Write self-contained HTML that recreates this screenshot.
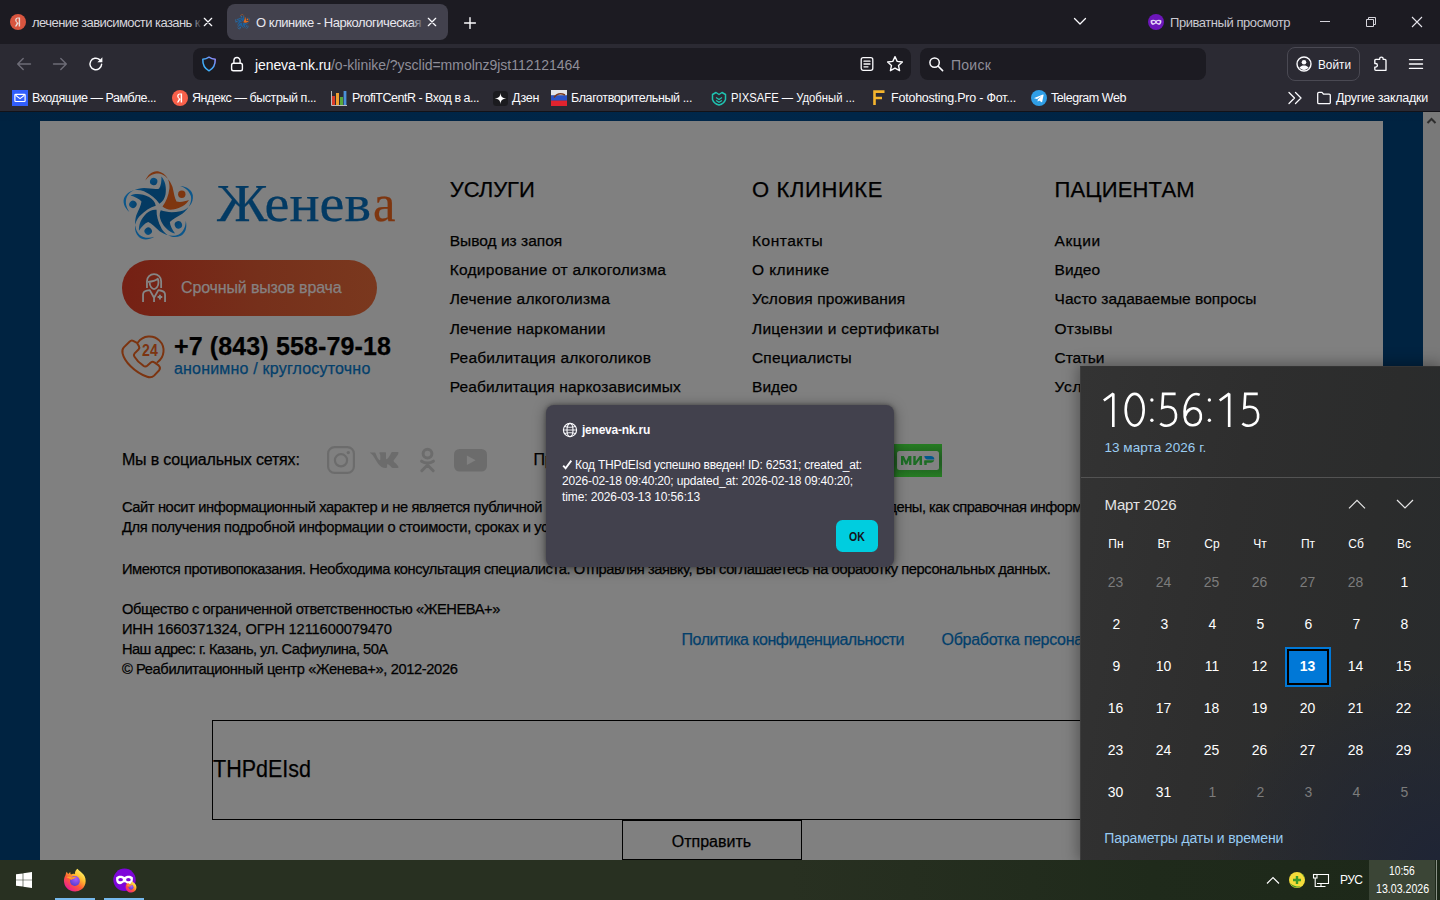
<!DOCTYPE html>
<html lang="ru"><head><meta charset="utf-8"><title>O klinike</title>
<style>
*{box-sizing:border-box;margin:0;padding:0}
html,body{width:1440px;height:900px;overflow:hidden;background:#002340;font-family:"Liberation Sans",sans-serif;}
.t{position:absolute;white-space:pre;line-height:1;}
.abs{position:absolute}
#chrome{position:absolute;left:0;top:0;width:1440px;height:112px;background:#2b2a33;overflow:hidden}
#tabbar{position:absolute;left:0;top:0;width:1440px;height:44px;background:#1c1b22}
#page{position:absolute;left:0;top:112px;width:1440px;height:748px;background:#002341;overflow:hidden}
#panel{position:absolute;left:40px;top:9px;width:1343px;height:760px;background:#808080}
#sb{position:absolute;left:1423px;top:0;width:17px;height:748px;background:#797979}
#dlg{position:absolute;left:546px;top:405px;width:348px;height:162px;background:#42414d;border-radius:8px;box-shadow:0 2px 14px rgba(0,0,0,.42),0 0 4px rgba(0,0,0,.35)}
#cal{position:absolute;left:1080px;top:366px;width:360px;height:494px;background:#2b2b2b;border-left:1px solid #3d3d3d;border-top:1px solid #343434;overflow:hidden}
#calsh{position:absolute;left:1080px;top:366px;width:360px;height:494px;box-shadow:0 0 14px 2px rgba(0,0,0,.36)}
#task{position:absolute;left:0;top:860px;width:1440px;height:40px;background:#273021;overflow:hidden}
</style></head><body>
<div id="page">
<div id="panel"></div>
<div id="sb"></div>

<div class="abs" style="left:0;top:0;width:1423px;height:9px;background:linear-gradient(90deg,#002240,#00274a 50%,#002240)"></div>
<div class="abs" style="left:122px;top:148px;width:255px;height:56px;border-radius:28px;background:linear-gradient(90deg,#752014 0%,#76301b 54%,#7a381e 100%)"></div>
<div class="abs" style="left:212px;top:608px;width:999px;height:100px;border:1px solid #000"></div>
<div class="abs" style="left:622px;top:707px;width:180px;height:41px;border:1px solid #000;border-top-width:2px"></div>
<svg class="abs" style="left:1423px;top:0" width="17" height="17" viewBox="0 0 17 17"><path d="M4.5 11L8.5 7L12.5 11" stroke="#2e2e2e" stroke-width="2" fill="none"/></svg>
<svg class="abs" style="left:110px;top:48px" width="100.0" height="95.0" viewBox="-49 -47.2 100 95"><defs><radialGradient id="sg2" gradientUnits="userSpaceOnUse" cx="0" cy="0" r="38"><stop offset=".5" stop-color="#043a62"/><stop offset="1" stop-color="#0e5d94"/></radialGradient></defs><g transform="rotate(0)" fill="#7e3610"><path d="M3.5 -0.7C7 -5.2 9.5 -11.2 10.5 -19.2C11 -27.2 7 -34.2 -1 -35.9C-6 -36.7 -11 -33.2 -13.7 -26.7C-10 -31.7 -5 -34.2 0 -33.7C6 -32.7 11 -27.2 13.5 -20.2C15 -14.2 15.5 -9.2 17.5 -5.7C21 -4.7 26 -5.7 30 -7.2C27 -2.2 21 1.3 14 2.3C10 2.8 6 1.8 3.5 -0.7Z"/><circle cx="22.8" cy="-13" r="3.7"/></g><g transform="rotate(72)" fill="url(#sg2)"><path d="M3.5 -0.7C7 -5.2 9.5 -11.2 10.5 -19.2C11 -27.2 7 -34.2 -1 -35.9C-6 -36.7 -11 -33.2 -13.7 -26.7C-10 -31.7 -5 -34.2 0 -33.7C6 -32.7 11 -27.2 13.5 -20.2C15 -14.2 15.5 -9.2 17.5 -5.7C21 -4.7 26 -5.7 30 -7.2C27 -2.2 21 1.3 14 2.3C10 2.8 6 1.8 3.5 -0.7Z"/><circle cx="22.8" cy="-13" r="3.7"/></g><g transform="rotate(144)" fill="url(#sg2)"><path d="M3.5 -0.7C7 -5.2 9.5 -11.2 10.5 -19.2C11 -27.2 7 -34.2 -1 -35.9C-6 -36.7 -11 -33.2 -13.7 -26.7C-10 -31.7 -5 -34.2 0 -33.7C6 -32.7 11 -27.2 13.5 -20.2C15 -14.2 15.5 -9.2 17.5 -5.7C21 -4.7 26 -5.7 30 -7.2C27 -2.2 21 1.3 14 2.3C10 2.8 6 1.8 3.5 -0.7Z"/><circle cx="22.8" cy="-13" r="3.7"/></g><g transform="rotate(216)" fill="url(#sg2)"><path d="M3.5 -0.7C7 -5.2 9.5 -11.2 10.5 -19.2C11 -27.2 7 -34.2 -1 -35.9C-6 -36.7 -11 -33.2 -13.7 -26.7C-10 -31.7 -5 -34.2 0 -33.7C6 -32.7 11 -27.2 13.5 -20.2C15 -14.2 15.5 -9.2 17.5 -5.7C21 -4.7 26 -5.7 30 -7.2C27 -2.2 21 1.3 14 2.3C10 2.8 6 1.8 3.5 -0.7Z"/><circle cx="22.8" cy="-13" r="3.7"/></g><g transform="rotate(288)" fill="url(#sg2)"><path d="M3.5 -0.7C7 -5.2 9.5 -11.2 10.5 -19.2C11 -27.2 7 -34.2 -1 -35.9C-6 -36.7 -11 -33.2 -13.7 -26.7C-10 -31.7 -5 -34.2 0 -33.7C6 -32.7 11 -27.2 13.5 -20.2C15 -14.2 15.5 -9.2 17.5 -5.7C21 -4.7 26 -5.7 30 -7.2C27 -2.2 21 1.3 14 2.3C10 2.8 6 1.8 3.5 -0.7Z"/><circle cx="22.8" cy="-13" r="3.7"/></g></svg><svg class="abs" style="left:134px;top:154px" width="40" height="44" viewBox="0 0 818 900"><g stroke="#868686" stroke-width="37" fill="none" stroke-linejoin="round"><path d="M265 452V310A145 145 0 0 1 555 310V452"/><path d="M285 326C360 322 440 302 487 262C500 290 502 310 500 335C500 420 450 472 410 472C370 472 320 420 320 335"/><path d="M185 738V590Q185 522 260 506L322 494L410 650L498 494L560 506Q635 522 635 590V738M410 650V738"/><path d="M530 588V684M482 636H578" stroke-width="40"/></g></svg>
<svg class="abs" style="left:116px;top:218px" width="60" height="54" viewBox="0 0 1000 900"><g stroke="#7c3410" stroke-width="33" fill="none" stroke-linejoin="round" stroke-linecap="round"><path d="M350 215L285 180Q255 165 225 195L130 290Q95 330 110 390C140 520 300 700 520 780Q590 805 635 760L720 670Q750 630 710 590L640 540Q610 515 580 540L520 595Q490 620 455 595C400 560 330 480 305 440Q290 415 310 390L375 325Q400 295 380 265Z"/><path d="M365 208A235 235 0 1 1 690 537"/></g><text x="566" y="438" text-anchor="middle" font-family="Liberation Sans, sans-serif" font-size="262" font-weight="700" fill="#7c3410" textLength="262" lengthAdjust="spacingAndGlyphs">24</text></svg>
<svg class="abs" style="left:327px;top:334px" width="28" height="28" viewBox="0 0 28 28"><rect x="1.1" y="1.1" width="25.8" height="25.8" rx="6.5" stroke="#6c6c6c" stroke-width="2.2" fill="none"/><circle cx="14" cy="14.3" r="6.1" stroke="#6c6c6c" stroke-width="2.2" fill="none"/><circle cx="21.3" cy="6.6" r="1.7" fill="#6c6c6c"/></svg>
<svg class="abs" style="left:370px;top:340px" width="29" height="16" viewBox="0 0 29 16"><path d="M0 .6H4.6C5.2 .6 5.5 .9 5.7 1.5C6.8 5 8.9 8.2 9.8 8.2C10.1 8.2 10.3 8 10.3 7.200V3.400C10.2 1.600 9.300 1.500 9.300 .9C9.300 .6 9.600 .300 10 .300H15.200C15.800 .300 16 .6 16 1.300V6.400C16 7 16.300 7.200 16.500 7.200C16.800 7.200 17.200 7 17.800 6.300C19.800 4.100 21.200 .800 21.200 .800C21.400 .400 21.700 .000 22.400 .000H27.400C28.400 .000 28.600 .500 28.400 1.200C27.900 3.200 23.800 8.200 23.800 8.200C23.500 8.700 23.400 8.900 23.800 9.500C24.100 9.900 25.200 10.800 25.900 11.600C27.200 13 28.200 14.200 28.500 15C28.700 15.700 28.300 16 27.500 16H22.800C21.900 16 21.600 15.500 20 13.800C18.600 12.400 18 12.200 17.700 12.200C17.200 12.200 17.100 12.300 17.100 13V15.100C17.100 15.700 16.900 16 15.400 16C12.900 16 10.100 14.500 8.100 11.700C5.100 7.600 3.400 2.900 .100 1.100C-.1 .8 0 .6 0 .6Z" fill="#6c6c6c"/></svg>
<svg class="abs" style="left:419px;top:335px" width="17" height="26" viewBox="0 0 17 26"><circle cx="8.500" cy="6.600" r="4.400" stroke="#6c6c6c" stroke-width="3" fill="none"/><path d="M2.600 14.200C6 16.600 11 16.600 14.400 14.200M8.500 16.300V18.500M8.500 18L2.800 23.700M8.500 18L14.200 23.700" stroke="#6c6c6c" stroke-width="3" fill="none" stroke-linecap="round"/></svg>
<svg class="abs" style="left:454px;top:337px" width="33" height="23" viewBox="0 0 33 23"><rect x="0" y="0" width="33" height="22.600" rx="5.500" fill="#6c6c6c"/><path d="M12.900 6.600L21.600 11.300L12.900 16Z" fill="#808080"/></svg>
<div class="abs" style="left:894px;top:332px;width:48px;height:33px;background:linear-gradient(180deg,#267c22 0%,#205f21 40%,#205f21 62%,#267c22 100%)"></div>
<div class="abs" style="left:896.700px;top:339.2px;width:42.200px;height:18.600px;background:#828282;border-radius:2.500px"></div>
<svg class="abs" style="left:901px;top:344px" width="34" height="9" viewBox="0 0 34 9"><path d="M0 0H2.900L5.200 5.200L7.500 0H10.400V9H8.100V3.800L6.100 8.400H4.300L2.300 3.800V9H0ZM12.300 0H14.700V5.400L18.600 0H21V9H18.600V3.600L14.700 9H12.300ZM23.300 5.300H25.700V9H23.300Z" fill="#1c6c24"/><path d="M23.300 0H29.500C32 0 33.500 1.200 33.300 3.500H26.500C24.800 3.500 23.600 2 23.300 0Z" fill="#00588c"/><path d="M23.300 4.200H33.200C32.800 5.800 31.500 6.700 29.600 6.700H23.300Z" fill="#1c6c24"/></svg><!--PAGE-->
<span class="t" style="left:217.00px;top:65.26px;font-size:52.5px;color:#033a63;font-family:'Liberation Serif',serif;transform:scaleX(1.0704);transform-origin:0 0;-webkit-text-stroke:0.25px;">Женев</span>
<span class="t" style="left:372.50px;top:65.26px;font-size:52.5px;color:#7e3610;font-family:'Liberation Serif',serif;transform:scaleX(0.9651);transform-origin:0 0;-webkit-text-stroke:0.25px;">а</span>
<span class="t" style="left:181.00px;top:168.46px;font-size:16px;color:#868181;letter-spacing:-0.144px;-webkit-text-stroke:0.25px;">Срочный вызов врача</span>
<span class="t" style="left:174.00px;top:222.34px;font-size:25px;color:#000;font-weight:700;letter-spacing:0.126px;-webkit-text-stroke:0.25px;">+7 (843) 558-79-18</span>
<span class="t" style="left:174.00px;top:248.66px;font-size:16px;color:#033f6b;letter-spacing:0.193px;-webkit-text-stroke:0.25px;">анонимно / круглосуточно</span>
<span class="t" style="left:449.70px;top:66.98px;font-size:22px;color:#000;letter-spacing:-0.030px;-webkit-text-stroke:0.25px;">УСЛУГИ</span>
<span class="t" style="left:752.00px;top:66.98px;font-size:22px;color:#000;letter-spacing:0.624px;-webkit-text-stroke:0.25px;">О КЛИНИКЕ</span>
<span class="t" style="left:1054.60px;top:66.98px;font-size:22px;color:#000;letter-spacing:0.140px;-webkit-text-stroke:0.25px;">ПАЦИЕНТАМ</span>
<span class="t" style="left:449.70px;top:121.28px;font-size:15.5px;color:#000;letter-spacing:0.009px;-webkit-text-stroke:0.25px;">Вывод из запоя</span>
<span class="t" style="left:449.70px;top:150.38px;font-size:15.5px;color:#000;letter-spacing:0.262px;-webkit-text-stroke:0.25px;">Кодирование от алкоголизма</span>
<span class="t" style="left:449.70px;top:179.48px;font-size:15.5px;color:#000;letter-spacing:0.224px;-webkit-text-stroke:0.25px;">Лечение алкоголизма</span>
<span class="t" style="left:449.70px;top:208.58px;font-size:15.5px;color:#000;letter-spacing:0.236px;-webkit-text-stroke:0.25px;">Лечение наркомании</span>
<span class="t" style="left:449.70px;top:237.68px;font-size:15.5px;color:#000;letter-spacing:0.214px;-webkit-text-stroke:0.25px;">Реабилитация алкоголиков</span>
<span class="t" style="left:449.70px;top:266.78px;font-size:15.5px;color:#000;letter-spacing:0.133px;-webkit-text-stroke:0.25px;">Реабилитация наркозависимых</span>
<span class="t" style="left:752.00px;top:121.28px;font-size:15.5px;color:#000;letter-spacing:0.518px;-webkit-text-stroke:0.25px;">Контакты</span>
<span class="t" style="left:752.00px;top:150.38px;font-size:15.5px;color:#000;letter-spacing:0.408px;-webkit-text-stroke:0.25px;">О клинике</span>
<span class="t" style="left:752.00px;top:179.48px;font-size:15.5px;color:#000;letter-spacing:0.145px;-webkit-text-stroke:0.25px;">Условия проживания</span>
<span class="t" style="left:752.00px;top:208.58px;font-size:15.5px;color:#000;letter-spacing:0.251px;-webkit-text-stroke:0.25px;">Лицензии и сертификаты</span>
<span class="t" style="left:752.00px;top:237.68px;font-size:15.5px;color:#000;letter-spacing:0.149px;-webkit-text-stroke:0.25px;">Специалисты</span>
<span class="t" style="left:752.00px;top:266.78px;font-size:15.5px;color:#000;letter-spacing:0.041px;-webkit-text-stroke:0.25px;">Видео</span>
<span class="t" style="left:1054.60px;top:121.28px;font-size:15.5px;color:#000;letter-spacing:0.534px;-webkit-text-stroke:0.25px;">Акции</span>
<span class="t" style="left:1054.60px;top:150.38px;font-size:15.5px;color:#000;letter-spacing:0.041px;-webkit-text-stroke:0.25px;">Видео</span>
<span class="t" style="left:1054.60px;top:179.48px;font-size:15.5px;color:#000;letter-spacing:0.030px;-webkit-text-stroke:0.25px;">Часто задаваемые вопросы</span>
<span class="t" style="left:1054.60px;top:208.58px;font-size:15.5px;color:#000;letter-spacing:0.203px;-webkit-text-stroke:0.25px;">Отзывы</span>
<span class="t" style="left:1054.60px;top:237.68px;font-size:15.5px;color:#000;letter-spacing:-0.072px;-webkit-text-stroke:0.25px;">Статьи</span>
<span class="t" style="left:1054.60px;top:266.78px;font-size:15.5px;color:#000;letter-spacing:0.621px;-webkit-text-stroke:0.25px;">Услуги</span>
<span class="t" style="left:121.90px;top:340.46px;font-size:16px;color:#000;letter-spacing:-0.171px;-webkit-text-stroke:0.25px;">Мы в социальных сетях:</span>
<span class="t" style="left:533.40px;top:340.46px;font-size:16px;color:#000;letter-spacing:-0.112px;-webkit-text-stroke:0.25px;">Принимаем к оплате:</span>
<span class="t" style="left:121.90px;top:388.06px;font-size:14.7px;color:#000;letter-spacing:-0.392px;-webkit-text-stroke:0.25px;">Сайт носит информационный характер и не является публичной</span>
<span class="t" style="left:547.00px;top:388.06px;font-size:14.7px;color:#000;-webkit-text-stroke:0.25px;">офертой.</span>
<span class="t" style="left:650.00px;top:388.06px;font-size:14.7px;color:#000;letter-spacing:0.306px;-webkit-text-stroke:0.25px;">Цены, указанные на сайте, приве</span>
<span class="t" style="left:888.50px;top:388.06px;font-size:14.7px;color:#000;letter-spacing:-0.507px;-webkit-text-stroke:0.25px;">дены, как справочная информация.</span>
<span class="t" style="left:121.90px;top:407.76px;font-size:14.7px;color:#000;letter-spacing:-0.300px;-webkit-text-stroke:0.25px;">Для получения подробной информации о стоимости, сроках и условиях</span>
<span class="t" style="left:121.90px;top:449.76px;font-size:14.7px;color:#000;letter-spacing:-0.421px;-webkit-text-stroke:0.25px;">Имеются противопоказания. Необходима консультация специалиста. Отправляя заявку, Вы соглашаетесь на обработку персональных данных.</span>
<span class="t" style="left:121.90px;top:490.16px;font-size:14.7px;color:#000;letter-spacing:-0.424px;-webkit-text-stroke:0.25px;">Общество с ограниченной ответственностью «ЖЕНЕВА+»</span>
<span class="t" style="left:121.90px;top:509.86px;font-size:14.7px;color:#000;letter-spacing:-0.137px;-webkit-text-stroke:0.25px;">ИНН 1660371324, ОГРН 1211600079470</span>
<span class="t" style="left:121.90px;top:529.66px;font-size:14.7px;color:#000;letter-spacing:-0.552px;-webkit-text-stroke:0.25px;">Наш адрес: г. Казань, ул. Сафиулина, 50А</span>
<span class="t" style="left:121.90px;top:550.06px;font-size:14.7px;color:#000;letter-spacing:-0.383px;-webkit-text-stroke:0.25px;">© Реабилитационный центр «Женева+», 2012-2026</span>
<span class="t" style="left:681.60px;top:520.16px;font-size:16px;color:#033f6b;letter-spacing:-0.505px;-webkit-text-stroke:0.25px;">Политика конфиденциальности</span>
<span class="t" style="left:941.60px;top:520.16px;font-size:16px;color:#033f6b;letter-spacing:-0.306px;-webkit-text-stroke:0.25px;">Обработка персональных данных</span>
<span class="t" style="left:213.00px;top:644.76px;font-size:24.5px;color:#000;transform:scaleX(0.8777);transform-origin:0 0;-webkit-text-stroke:0.25px;">THPdEIsd</span>
<span class="t" style="left:671.70px;top:721.66px;font-size:16px;color:#000;letter-spacing:0.017px;-webkit-text-stroke:0.25px;">Отправить</span>
</div>
<div id="chrome"><div id="tabbar"></div>

<div class="abs" style="left:0;top:111px;width:1440px;height:1px;background:#131218"></div>
<div class="abs" style="left:227px;top:4px;width:221px;height:36px;background:#42414d;border-radius:8px"></div>
<div class="abs" style="left:193px;top:48px;width:718px;height:32px;background:#1c1b22;border-radius:8px"></div>
<div class="abs" style="left:920px;top:48px;width:286px;height:32px;background:#1c1b22;border-radius:8px"></div>
<div class="abs" style="left:1287px;top:47px;width:73px;height:34px;border:1px solid #4a4953;border-radius:8px"></div>

<span class="t" style="left:32.00px;top:16.00px;font-size:13px;color:#d6d5dc;letter-spacing:-0.564px;">лечение зависимости казань к</span>
<span class="t" style="left:256.00px;top:16.00px;font-size:13px;color:#e8e7ee;letter-spacing:-0.475px;">О клинике - Наркологическая</span>
<span class="t" style="left:1170.00px;top:16.00px;font-size:13px;color:#c9c8d0;letter-spacing:-0.443px;">Приватный просмотр</span>
<span class="t" style="left:255.00px;top:58.35px;font-size:14px;color:#fbfbfe;letter-spacing:-0.087px;">jeneva-nk.ru</span>
<span class="t" style="left:331.00px;top:58.35px;font-size:14px;color:#8f8e99;letter-spacing:-0.025px;">/o-klinike/?ysclid=mmolnz9jst112121464</span>
<span class="t" style="left:951.00px;top:57.65px;font-size:14px;color:#8f8e99;letter-spacing:0.241px;">Поиск</span>
<span class="t" style="left:1318.00px;top:58.00px;font-size:13px;color:#fbfbfe;transform:scaleX(0.9068);transform-origin:0 0;">Войти</span>
<span class="t" style="left:32.00px;top:92.42px;font-size:12.5px;color:#fbfbfe;letter-spacing:-0.466px;">Входящие — Рамбле...</span>
<span class="t" style="left:192.00px;top:92.42px;font-size:12.5px;color:#fbfbfe;letter-spacing:-0.438px;">Яндекс — быстрый п...</span>
<span class="t" style="left:352.00px;top:92.42px;font-size:12.5px;color:#fbfbfe;letter-spacing:-0.485px;">ProfiTCentR - Вход в а...</span>
<span class="t" style="left:512.00px;top:92.42px;font-size:12.5px;color:#fbfbfe;letter-spacing:-0.332px;">Дзен</span>
<span class="t" style="left:571.00px;top:92.42px;font-size:12.5px;color:#fbfbfe;letter-spacing:-0.385px;">Благотворительный ...</span>
<span class="t" style="left:731.00px;top:92.42px;font-size:12.5px;color:#fbfbfe;transform:scaleX(0.9026);transform-origin:0 0;">PIXSAFE — Удобный ...</span>
<span class="t" style="left:891.00px;top:92.42px;font-size:12.5px;color:#fbfbfe;letter-spacing:-0.221px;">Fotohosting.Pro - Фот...</span>
<span class="t" style="left:1051.00px;top:92.42px;font-size:12.5px;color:#fbfbfe;letter-spacing:-0.447px;">Telegram Web</span>
<span class="t" style="left:1336.00px;top:92.42px;font-size:12.5px;color:#fbfbfe;letter-spacing:-0.252px;">Другие закладки</span>
<div class="abs" style="left:411px;top:12px;width:11px;height:20px;background:linear-gradient(90deg,rgba(66,65,77,0),rgba(66,65,77,.8))"></div>
<div class="abs" style="left:190px;top:12px;width:11px;height:20px;background:linear-gradient(90deg,rgba(28,27,34,0),rgba(28,27,34,.85))"></div>
<svg class="abs" style="left:10px;top:14px;" width="16" height="16" viewBox="0 0 16 16"><circle cx="8" cy="8" r="8" fill="#d8553f"/><path d="M9.0 3.6H7.9C6.2 3.6 5.2 4.6 5.2 6.0c0 1.2.5 2 1.7 2.8L4.9 12.4h1.6l2.1-3.4-.8-.5C6.9 7.9 6.5 7.3 6.5 6.1c0-.9.6-1.5 1.5-1.5h.7v7.8h1.4V3.6z" fill="#e9dcd8"/></svg>
<svg class="abs" style="left:232.1px;top:11.7px" width="21.6" height="20.52" viewBox="-49 -47.2 100 95"><defs><radialGradient id="sg1" gradientUnits="userSpaceOnUse" cx="0" cy="0" r="38"><stop offset=".5" stop-color="#1c5f9a"/><stop offset="1" stop-color="#2a7fc0"/></radialGradient></defs><g transform="rotate(0)" fill="#dd6c20"><path d="M3.5 -0.7C7 -5.2 9.5 -11.2 10.5 -19.2C11 -27.2 7 -34.2 -1 -35.9C-6 -36.7 -11 -33.2 -13.7 -26.7C-10 -31.7 -5 -34.2 0 -33.7C6 -32.7 11 -27.2 13.5 -20.2C15 -14.2 15.5 -9.2 17.5 -5.7C21 -4.7 26 -5.7 30 -7.2C27 -2.2 21 1.3 14 2.3C10 2.8 6 1.8 3.5 -0.7Z"/><circle cx="22.8" cy="-13" r="3.7"/></g><g transform="rotate(72)" fill="url(#sg1)"><path d="M3.5 -0.7C7 -5.2 9.5 -11.2 10.5 -19.2C11 -27.2 7 -34.2 -1 -35.9C-6 -36.7 -11 -33.2 -13.7 -26.7C-10 -31.7 -5 -34.2 0 -33.7C6 -32.7 11 -27.2 13.5 -20.2C15 -14.2 15.5 -9.2 17.5 -5.7C21 -4.7 26 -5.7 30 -7.2C27 -2.2 21 1.3 14 2.3C10 2.8 6 1.8 3.5 -0.7Z"/><circle cx="22.8" cy="-13" r="3.7"/></g><g transform="rotate(144)" fill="url(#sg1)"><path d="M3.5 -0.7C7 -5.2 9.5 -11.2 10.5 -19.2C11 -27.2 7 -34.2 -1 -35.9C-6 -36.7 -11 -33.2 -13.7 -26.7C-10 -31.7 -5 -34.2 0 -33.7C6 -32.7 11 -27.2 13.5 -20.2C15 -14.2 15.5 -9.2 17.5 -5.7C21 -4.7 26 -5.7 30 -7.2C27 -2.2 21 1.3 14 2.3C10 2.8 6 1.8 3.5 -0.7Z"/><circle cx="22.8" cy="-13" r="3.7"/></g><g transform="rotate(216)" fill="url(#sg1)"><path d="M3.5 -0.7C7 -5.2 9.5 -11.2 10.5 -19.2C11 -27.2 7 -34.2 -1 -35.9C-6 -36.7 -11 -33.2 -13.7 -26.7C-10 -31.7 -5 -34.2 0 -33.7C6 -32.7 11 -27.2 13.5 -20.2C15 -14.2 15.5 -9.2 17.5 -5.7C21 -4.7 26 -5.7 30 -7.2C27 -2.2 21 1.3 14 2.3C10 2.8 6 1.8 3.5 -0.7Z"/><circle cx="22.8" cy="-13" r="3.7"/></g><g transform="rotate(288)" fill="url(#sg1)"><path d="M3.5 -0.7C7 -5.2 9.5 -11.2 10.5 -19.2C11 -27.2 7 -34.2 -1 -35.9C-6 -36.7 -11 -33.2 -13.7 -26.7C-10 -31.7 -5 -34.2 0 -33.7C6 -32.7 11 -27.2 13.5 -20.2C15 -14.2 15.5 -9.2 17.5 -5.7C21 -4.7 26 -5.7 30 -7.2C27 -2.2 21 1.3 14 2.3C10 2.8 6 1.8 3.5 -0.7Z"/><circle cx="22.8" cy="-13" r="3.7"/></g></svg>
<svg class="abs" style="left:202.5px;top:17px;" width="10" height="10" viewBox="0 0 10 10"><path d="M1.3 1.3L8.7 8.7M8.7 1.3L1.3 8.7" stroke="#fbfbfe" stroke-width="1.25" fill="none" stroke-linecap="round"/></svg>
<svg class="abs" style="left:427.3px;top:17px;" width="10" height="10" viewBox="0 0 10 10"><path d="M1.3 1.3L8.7 8.7M8.7 1.3L1.3 8.7" stroke="#fbfbfe" stroke-width="1.25" fill="none" stroke-linecap="round"/></svg>
<svg class="abs" style="left:462.6px;top:15.8px;" width="14" height="14" viewBox="0 0 14 14"><path d="M7 1.6V12.4M1.6 7H12.4" stroke="#fbfbfe" stroke-width="1.4" fill="none" stroke-linecap="round"/></svg>
<svg class="abs" style="left:1073px;top:16px;" width="14" height="10" viewBox="0 0 14 10"><path d="M1.5 2.5L7 8L12.5 2.5" stroke="#fbfbfe" stroke-width="1.3" fill="none" stroke-linecap="round" stroke-linejoin="round"/></svg>
<svg class="abs" style="left:1148px;top:14px;" width="16" height="16" viewBox="0 0 16 16"><circle cx="8" cy="8" r="8" fill="#6c16ba"/><path d="M2.6 6.6C4 5.4 6.2 5.4 8 6.6 9.8 5.4 12 5.4 13.4 6.6 13.7 9 12.6 10.9 11 10.9 9.6 10.9 9 9.6 8 9.6 7 9.6 6.4 10.9 5 10.9 3.4 10.9 2.3 9 2.6 6.6Z" fill="#e4d6f5"/><ellipse cx="5.6" cy="8.1" rx="1.5" ry="1.05" fill="#6c16ba"/><ellipse cx="10.4" cy="8.1" rx="1.5" ry="1.05" fill="#6c16ba"/></svg>
<div class="abs" style="left:1320px;top:21px;width:10px;height:1px;background:#d5d4db"></div>
<svg class="abs" style="left:1365px;top:16px;" width="12" height="12" viewBox="0 0 12 12"><path d="M1.5 3.5H8.5V10.5H1.5Z M3.5 3.5V1.5H10.5V8.5H8.5" stroke="#d5d4db" stroke-width="1" fill="none"/></svg>
<svg class="abs" style="left:1411px;top:16px;" width="12" height="12" viewBox="0 0 12 12"><path d="M1 1L11 11M11 1L1 11" stroke="#e6e5ec" stroke-width="1.1" fill="none"/></svg>
<svg class="abs" style="left:16px;top:56px;" width="16" height="16" viewBox="0 0 16 16"><path d="M14.5 8H2M7.2 2.5L1.7 8L7.2 13.5" stroke="#6d6c77" stroke-width="1.4" fill="none" stroke-linecap="round" stroke-linejoin="round"/></svg>
<svg class="abs" style="left:52px;top:56px;" width="16" height="16" viewBox="0 0 16 16"><path d="M1.5 8H14M8.8 2.5L14.3 8L8.8 13.5" stroke="#6d6c77" stroke-width="1.4" fill="none" stroke-linecap="round" stroke-linejoin="round"/></svg>
<svg class="abs" style="left:88px;top:56px;" width="16" height="16" viewBox="0 0 16 16"><path d="M13.6 8.3A5.8 5.8 0 1 1 11.6 3.6" stroke="#fbfbfe" stroke-width="1.5" fill="none" stroke-linecap="round"/><path d="M14.4 1.2V6.2H9.4Z" fill="#fbfbfe"/></svg>
<svg class="abs" style="left:201px;top:56px;" width="16" height="16" viewBox="0 0 16 16"><defs><linearGradient id="sh" x1="0" y1="1" x2="1" y2="0"><stop offset="0" stop-color="#39b8ff"/><stop offset=".55" stop-color="#4aa3f5"/><stop offset="1" stop-color="#a487ff"/></linearGradient></defs><path d="M8 1.2C10 2.6 12.2 3.2 14.2 3.3 14.4 8.6 12.4 12.6 8 14.8 3.6 12.6 1.6 8.6 1.8 3.3 3.8 3.2 6 2.6 8 1.2Z" stroke="url(#sh)" stroke-width="1.5" fill="none" stroke-linejoin="round"/></svg>
<svg class="abs" style="left:229px;top:56px;" width="16" height="16" viewBox="0 0 16 16"><rect x="2.6" y="7.2" width="10.8" height="7.6" rx="1.8" stroke="#fbfbfe" stroke-width="1.4" fill="none"/><path d="M4.9 7V4.6A3.1 3.1 0 0 1 11.1 4.6V7" stroke="#fbfbfe" stroke-width="1.4" fill="none"/></svg>
<svg class="abs" style="left:859px;top:56px;" width="16" height="16" viewBox="0 0 16 16"><rect x="2.2" y="1.7" width="11.6" height="12.6" rx="2" stroke="#fbfbfe" stroke-width="1.3" fill="none"/><path d="M5 5.2H11M5 8H11M5 10.8H9" stroke="#fbfbfe" stroke-width="1.3" fill="none" stroke-linecap="round"/></svg>
<svg class="abs" style="left:886px;top:55px;" width="18" height="18" viewBox="0 0 18 18"><path d="M9 1.6L11.2 6.4 16.4 7 12.5 10.5 13.6 15.7 9 13.1 4.4 15.7 5.5 10.5 1.6 7 6.8 6.4Z" stroke="#fbfbfe" stroke-width="1.35" fill="none" stroke-linejoin="round"/></svg>
<svg class="abs" style="left:928px;top:56px;" width="16" height="16" viewBox="0 0 16 16"><circle cx="6.6" cy="6.6" r="4.7" stroke="#fbfbfe" stroke-width="1.5" fill="none"/><path d="M10.2 10.2L14.6 14.6" stroke="#fbfbfe" stroke-width="1.6" stroke-linecap="round"/></svg>
<svg class="abs" style="left:1296px;top:56px;" width="16" height="16" viewBox="0 0 16 16"><circle cx="8" cy="8" r="7" stroke="#fbfbfe" stroke-width="1.4" fill="none"/><circle cx="8" cy="6.3" r="2.3" fill="#fbfbfe"/><path d="M3.4 11.6C4.6 9.9 6.2 9.4 8 9.4 9.8 9.4 11.4 9.9 12.6 11.6 11.4 13.3 9.8 14 8 14 6.2 14 4.6 13.3 3.4 11.6Z" fill="#fbfbfe"/></svg>
<svg class="abs" style="left:1372px;top:56px;" width="16" height="16" viewBox="0 0 16 16"><path d="M7.600 3.400V2.900A1.800 1.800 0 0 1 11.200 2.900V3.400H13A1 1 0 0 1 14 4.400V14.300H3.800A1 1 0 0 1 2.800 13.300V11.100H3.600A1.800 1.800 0 0 0 3.600 7.500H2.800V4.400A1 1 0 0 1 3.800 3.400Z" stroke="#fbfbfe" stroke-width="1.35" fill="none" stroke-linejoin="round"/></svg>
<svg class="abs" style="left:1408px;top:56px;" width="16" height="16" viewBox="0 0 16 16"><path d="M1.5 3.6H14.5M1.5 8H14.5M1.5 12.4H14.5" stroke="#fbfbfe" stroke-width="1.4" stroke-linecap="round"/></svg>
<svg class="abs" style="left:12px;top:90px;" width="16" height="16" viewBox="0 0 16 16"><rect width="16" height="16" fill="#315efb"/><rect x="2.9" y="4.3" width="10.2" height="7.2" rx=".8" stroke="#fff" stroke-width="1.2" fill="none"/><path d="M3.6 5.2L8 8.6 12.4 5.2" stroke="#fff" stroke-width="1.1" fill="none"/></svg>
<svg class="abs" style="left:172px;top:90px;" width="16" height="16" viewBox="0 0 16 16"><circle cx="8" cy="8" r="8" fill="#f8604a"/><path d="M9.0 3.4H7.9C6.2 3.4 5.2 4.4 5.2 5.9c0 1.2.5 2 1.7 2.8L4.9 12.6h1.6l2.1-3.6-.8-.5C6.9 7.9 6.5 7.2 6.5 6c0-.9.6-1.5 1.5-1.5h.7v8.1h1.4V3.4z" fill="#fff"/></svg>
<svg class="abs" style="left:331px;top:90px;" width="16" height="16" viewBox="0 0 16 16"><rect x="1" y="6" width="3" height="9" fill="#d83b2a"/><rect x="5" y="3" width="3" height="12" fill="#f0a030"/><rect x="9" y="7" width="3" height="8" fill="#58a83a"/><rect x="12.6" y="1" width="2.8" height="14" fill="#4a90d8"/><path d="M0.5 1V15.5H16" stroke="#bbb" stroke-width="1" fill="none"/></svg>
<svg class="abs" style="left:493px;top:91px;" width="15" height="15" viewBox="0 0 15 15"><rect width="15" height="15" rx="3.5" fill="#1b1b1f"/><path d="M7.5 1.8C7.7 5.6 9.4 7.3 13.2 7.5 9.4 7.7 7.7 9.4 7.5 13.2 7.3 9.4 5.6 7.7 1.8 7.5 5.6 7.3 7.3 5.6 7.5 1.8Z" fill="#fff"/></svg>
<svg class="abs" style="left:551px;top:90px;" width="16" height="16" viewBox="0 0 16 16"><rect width="16" height="5.6" fill="#e4e4ea"/><rect y="5.4" width="16" height="5.4" fill="#2a52c8"/><rect y="10.6" width="16" height="5.4" fill="#e0232e"/><path d="M3 7.5C6 3.5 10 3 14 5" stroke="#7a3a20" stroke-width="1.6" fill="none"/></svg>
<svg class="abs" style="left:711px;top:90px;" width="16" height="16" viewBox="0 0 16 16"><path d="M1.5 4.5L5 2.5 8 4.5 11 2.5 14.5 4.5V9.5C13.5 12.5 11 14.3 8 15 5 14.3 2.5 12.5 1.5 9.5Z" stroke="#1fc2b0" stroke-width="1.5" fill="none" stroke-linejoin="round"/><path d="M5 7.5L8 9.5 11 7.5M5 10.4L8 12.2 11 10.4" stroke="#1fc2b0" stroke-width="1.2" fill="none"/></svg>
<svg class="abs" style="left:872px;top:90px;" width="14" height="16" viewBox="0 0 14 16"><path d="M2.5 15V1.6H12.5M2.5 8H10" stroke="#f5b52e" stroke-width="2.6" fill="none"/></svg>
<svg class="abs" style="left:1031px;top:90px;" width="16" height="16" viewBox="0 0 16 16"><circle cx="8" cy="8" r="8" fill="#2f9ee6"/><path d="M3.3 7.9L12 4.4C12.4 4.3 12.7 4.6 12.6 5.1L11.2 11.7C11.1 12.2 10.7 12.3 10.3 12.1L8.1 10.5 7 11.5C6.8 11.7 6.6 11.6 6.6 11.3L6.8 9.4 10.6 6 6 8.9 3.4 8.3C3 8.2 3 8 3.3 7.9Z" fill="#fff"/></svg>
<svg class="abs" style="left:1287px;top:91px;" width="16" height="14" viewBox="0 0 16 14"><path d="M2 1.5L7.5 7 2 12.5M8.5 1.5L14 7 8.5 12.5" stroke="#fbfbfe" stroke-width="1.3" fill="none" stroke-linecap="round" stroke-linejoin="round"/></svg>
<svg class="abs" style="left:1316px;top:90px;" width="16" height="16" viewBox="0 0 16 16"><path d="M1.7 3.6A1.2 1.2 0 0 1 2.9 2.4H6L7.6 4.2H13.1A1.2 1.2 0 0 1 14.3 5.4V12.4A1.2 1.2 0 0 1 13.1 13.6H2.9A1.2 1.2 0 0 1 1.7 12.4Z" stroke="#fbfbfe" stroke-width="1.3" fill="none" stroke-linejoin="round"/></svg>
</div>
<div id="dlg">

<div class="abs" style="left:290px;top:115px;width:42px;height:32px;background:#00cddf;border-radius:6.5px"></div>
<svg class="abs" style="left:16.3px;top:16.6px" width="16" height="16" viewBox="0 0 16 16"><g stroke="#fbfbfe" stroke-width="1.15" fill="none"><circle cx="8" cy="8" r="6.6"/><ellipse cx="8" cy="8" rx="3" ry="6.6"/><path d="M1.6 8H14.4M2.6 4.4C5.5 5.6 10.500 5.6 13.4 4.4M2.6 11.6C5.5 10.4 10.500 10.4 13.4 11.6" stroke-width=".9"/></g></svg>
<svg class="abs" style="left:15.5px;top:53.5px" width="11" height="11" viewBox="0 0 11 11"><path d="M1.2 6.6L3.6 9.3L9.300 1.6" stroke="#fbfbfe" stroke-width="1.9" fill="none" stroke-linejoin="miter"/></svg>

<span class="t" style="left:36.00px;top:19.34px;font-size:12px;color:#fbfbfe;font-weight:700;letter-spacing:-0.225px;">jeneva-nk.ru</span>
<span class="t" style="left:29.00px;top:53.84px;font-size:12px;color:#fbfbfe;letter-spacing:-0.212px;">Код THPdEIsd успешно введен! ID: 62531; created_at:</span>
<span class="t" style="left:16.00px;top:69.84px;font-size:12px;color:#fbfbfe;letter-spacing:-0.162px;">2026-02-18 09:40:20; updated_at: 2026-02-18 09:40:20;</span>
<span class="t" style="left:16.00px;top:85.84px;font-size:12px;color:#fbfbfe;letter-spacing:-0.111px;">time: 2026-03-13 10:56:13</span>
<span class="t" style="left:302.80px;top:125.00px;font-size:13px;color:#15141a;font-weight:700;transform:scaleX(0.8103);transform-origin:0 0;">OK</span>
</div>
<div id="calsh"></div>
<div id="cal">

<div class="abs" style="left:0;top:0;width:360px;height:494px;background:radial-gradient(ellipse 230px 190px at 100% 100%,rgba(30,36,54,.9),rgba(30,36,54,0) 100%),linear-gradient(100deg,#333333 0%,#2e2e2e 40%,#2b2c2c 72%,#282b2d 100%)"></div>
<div class="abs" style="left:0;top:110px;width:360px;height:1px;background:#535353"></div>
<div class="abs" style="left:204px;top:279.5px;width:46px;height:40px;background:#0078d7;border:2px solid #0078d7;box-shadow:inset 0 0 0 2px #000"></div>
<svg class="abs" style="left:266px;top:131px" width="20" height="12" viewBox="0 0 20 12"><path d="M2 10.400L10 2.400L18 10.400" stroke="#e6e6e6" stroke-width="1.2" fill="none"/></svg>
<svg class="abs" style="left:314px;top:131px" width="20" height="12" viewBox="0 0 20 12"><path d="M2 2L10 10L18 2" stroke="#e6e6e6" stroke-width="1.2" fill="none"/></svg>
<svg class="abs" style="left:14px;top:13px" width="180" height="85" viewBox="0 0 1440 680"><g stroke="#fff" stroke-width="21" fill="none" stroke-linejoin="miter"><path d="M70.5 164L146.5 109V375" stroke-linejoin="bevel"/><ellipse cx="317.5" cy="237.5" rx="72" ry="127"/><path d="M645 111H545L538 222C570 211 602 209 626 228C652 248 653 300 640 326C624 360 580 371 550 363C540 360 530 355 522 348"/><path d="M838 119C800 100 760 120 735 170C712 215 712 290 725 325C745 372 812 372 836 335C856 300 850 250 815 232C780 215 735 235 721 290"/><path d="M997.5 164L1073.5 109V375" stroke-linejoin="bevel"/><path d="M1302 111H1202L1195 222C1227 211 1259 209 1283 228C1309 248 1310 300 1297 326C1281 360 1237 371 1207 363C1197 360 1187 355 1179 348"/></g><circle cx="455" cy="160" r="13.5" fill="#fff" stroke="none"/><circle cx="455" cy="322" r="13.5" fill="#fff" stroke="none"/><circle cx="915" cy="160" r="13.5" fill="#fff" stroke="none"/><circle cx="915" cy="322" r="13.5" fill="#fff" stroke="none"/></svg>
<span class="t" style="left:23.40px;top:74.47px;font-size:13.5px;color:#9bcdf3;letter-spacing:0.070px;">13 марта 2026 г.</span>
<span class="t" style="left:23.40px;top:129.50px;font-size:15px;color:#e4e4e4;letter-spacing:-0.160px;">Март 2026</span>
<span class="t" style="left:27.37px;top:170.84px;font-size:12px;color:#ffffff;">Пн</span>
<span class="t" style="left:76.45px;top:170.84px;font-size:12px;color:#ffffff;">Вт</span>
<span class="t" style="left:123.33px;top:170.84px;font-size:12px;color:#ffffff;">Ср</span>
<span class="t" style="left:172.25px;top:170.84px;font-size:12px;color:#ffffff;">Чт</span>
<span class="t" style="left:219.94px;top:170.84px;font-size:12px;color:#ffffff;">Пт</span>
<span class="t" style="left:267.23px;top:170.84px;font-size:12px;color:#ffffff;">Сб</span>
<span class="t" style="left:315.99px;top:170.84px;font-size:12px;color:#ffffff;">Вс</span>
<span class="t" style="left:26.38px;top:207.18px;font-size:15.5px;color:#7c7c7c;transform:scaleX(.9);transform-origin:50% 50%;">23</span>
<span class="t" style="left:74.38px;top:207.18px;font-size:15.5px;color:#7c7c7c;transform:scaleX(.9);transform-origin:50% 50%;">24</span>
<span class="t" style="left:122.38px;top:207.18px;font-size:15.5px;color:#7c7c7c;transform:scaleX(.9);transform-origin:50% 50%;">25</span>
<span class="t" style="left:170.38px;top:207.18px;font-size:15.5px;color:#7c7c7c;transform:scaleX(.9);transform-origin:50% 50%;">26</span>
<span class="t" style="left:218.38px;top:207.18px;font-size:15.5px;color:#7c7c7c;transform:scaleX(.9);transform-origin:50% 50%;">27</span>
<span class="t" style="left:266.38px;top:207.18px;font-size:15.5px;color:#7c7c7c;transform:scaleX(.9);transform-origin:50% 50%;">28</span>
<span class="t" style="left:318.69px;top:207.18px;font-size:15.5px;color:#ffffff;transform:scaleX(.9);transform-origin:50% 50%;">1</span>
<span class="t" style="left:30.69px;top:249.18px;font-size:15.5px;color:#ffffff;transform:scaleX(.9);transform-origin:50% 50%;">2</span>
<span class="t" style="left:78.69px;top:249.18px;font-size:15.5px;color:#ffffff;transform:scaleX(.9);transform-origin:50% 50%;">3</span>
<span class="t" style="left:126.69px;top:249.18px;font-size:15.5px;color:#ffffff;transform:scaleX(.9);transform-origin:50% 50%;">4</span>
<span class="t" style="left:174.69px;top:249.18px;font-size:15.5px;color:#ffffff;transform:scaleX(.9);transform-origin:50% 50%;">5</span>
<span class="t" style="left:222.69px;top:249.18px;font-size:15.5px;color:#ffffff;transform:scaleX(.9);transform-origin:50% 50%;">6</span>
<span class="t" style="left:270.69px;top:249.18px;font-size:15.5px;color:#ffffff;transform:scaleX(.9);transform-origin:50% 50%;">7</span>
<span class="t" style="left:318.69px;top:249.18px;font-size:15.5px;color:#ffffff;transform:scaleX(.9);transform-origin:50% 50%;">8</span>
<span class="t" style="left:30.69px;top:291.18px;font-size:15.5px;color:#ffffff;transform:scaleX(.9);transform-origin:50% 50%;">9</span>
<span class="t" style="left:74.38px;top:291.18px;font-size:15.5px;color:#ffffff;transform:scaleX(.9);transform-origin:50% 50%;">10</span>
<span class="t" style="left:122.95px;top:291.18px;font-size:15.5px;color:#ffffff;transform:scaleX(.9);transform-origin:50% 50%;">11</span>
<span class="t" style="left:170.38px;top:291.18px;font-size:15.5px;color:#ffffff;transform:scaleX(.9);transform-origin:50% 50%;">12</span>
<span class="t" style="left:218.38px;top:291.18px;font-size:15.5px;color:#ffffff;font-weight:700;transform:scaleX(.9);transform-origin:50% 50%;">13</span>
<span class="t" style="left:266.38px;top:291.18px;font-size:15.5px;color:#ffffff;transform:scaleX(.9);transform-origin:50% 50%;">14</span>
<span class="t" style="left:314.38px;top:291.18px;font-size:15.5px;color:#ffffff;transform:scaleX(.9);transform-origin:50% 50%;">15</span>
<span class="t" style="left:26.38px;top:333.18px;font-size:15.5px;color:#ffffff;transform:scaleX(.9);transform-origin:50% 50%;">16</span>
<span class="t" style="left:74.38px;top:333.18px;font-size:15.5px;color:#ffffff;transform:scaleX(.9);transform-origin:50% 50%;">17</span>
<span class="t" style="left:122.38px;top:333.18px;font-size:15.5px;color:#ffffff;transform:scaleX(.9);transform-origin:50% 50%;">18</span>
<span class="t" style="left:170.38px;top:333.18px;font-size:15.5px;color:#ffffff;transform:scaleX(.9);transform-origin:50% 50%;">19</span>
<span class="t" style="left:218.38px;top:333.18px;font-size:15.5px;color:#ffffff;transform:scaleX(.9);transform-origin:50% 50%;">20</span>
<span class="t" style="left:266.38px;top:333.18px;font-size:15.5px;color:#ffffff;transform:scaleX(.9);transform-origin:50% 50%;">21</span>
<span class="t" style="left:314.38px;top:333.18px;font-size:15.5px;color:#ffffff;transform:scaleX(.9);transform-origin:50% 50%;">22</span>
<span class="t" style="left:26.38px;top:375.18px;font-size:15.5px;color:#ffffff;transform:scaleX(.9);transform-origin:50% 50%;">23</span>
<span class="t" style="left:74.38px;top:375.18px;font-size:15.5px;color:#ffffff;transform:scaleX(.9);transform-origin:50% 50%;">24</span>
<span class="t" style="left:122.38px;top:375.18px;font-size:15.5px;color:#ffffff;transform:scaleX(.9);transform-origin:50% 50%;">25</span>
<span class="t" style="left:170.38px;top:375.18px;font-size:15.5px;color:#ffffff;transform:scaleX(.9);transform-origin:50% 50%;">26</span>
<span class="t" style="left:218.38px;top:375.18px;font-size:15.5px;color:#ffffff;transform:scaleX(.9);transform-origin:50% 50%;">27</span>
<span class="t" style="left:266.38px;top:375.18px;font-size:15.5px;color:#ffffff;transform:scaleX(.9);transform-origin:50% 50%;">28</span>
<span class="t" style="left:314.38px;top:375.18px;font-size:15.5px;color:#ffffff;transform:scaleX(.9);transform-origin:50% 50%;">29</span>
<span class="t" style="left:26.38px;top:417.18px;font-size:15.5px;color:#ffffff;transform:scaleX(.9);transform-origin:50% 50%;">30</span>
<span class="t" style="left:74.38px;top:417.18px;font-size:15.5px;color:#ffffff;transform:scaleX(.9);transform-origin:50% 50%;">31</span>
<span class="t" style="left:126.69px;top:417.18px;font-size:15.5px;color:#7c7c7c;transform:scaleX(.9);transform-origin:50% 50%;">1</span>
<span class="t" style="left:174.69px;top:417.18px;font-size:15.5px;color:#7c7c7c;transform:scaleX(.9);transform-origin:50% 50%;">2</span>
<span class="t" style="left:222.69px;top:417.18px;font-size:15.5px;color:#7c7c7c;transform:scaleX(.9);transform-origin:50% 50%;">3</span>
<span class="t" style="left:270.69px;top:417.18px;font-size:15.5px;color:#7c7c7c;transform:scaleX(.9);transform-origin:50% 50%;">4</span>
<span class="t" style="left:318.69px;top:417.18px;font-size:15.5px;color:#7c7c7c;transform:scaleX(.9);transform-origin:50% 50%;">5</span>
<span class="t" style="left:23.30px;top:464.45px;font-size:14px;color:#98cbf3;letter-spacing:-0.134px;">Параметры даты и времени</span>
</div>
<div id="task">

<div class="abs" style="left:0;top:0;width:1440px;height:40px;background:linear-gradient(90deg,#283021 0%,#283021 55%,#1f2a1b 80%,#1d2819 100%)"></div>
<div class="abs" style="left:1369px;top:0;width:66px;height:40px;background:#3b4536"></div>
<div class="abs" style="left:1435.5px;top:0;width:1px;height:40px;background:#8a9186"></div>
<div class="abs" style="left:55px;top:38px;width:40px;height:2px;background:#76b9ed"></div>
<div class="abs" style="left:104px;top:38px;width:40px;height:2px;background:#76b9ed"></div>
<svg class="abs" style="left:16px;top:12px" width="16" height="16" viewBox="0 0 16 16"><path d="M0 2.3L6.7 1.4V7.7H0ZM7.3 1.3L16 0V7.7H7.3ZM0 8.3H6.7V14.6L0 13.7ZM7.3 8.3H16V16L7.3 14.7Z" fill="#fff"/></svg>
<svg class="abs" style="left:1266px;top:16px" width="14" height="9" viewBox="0 0 14 9"><path d="M1 7.5L7 1.5L13 7.5" stroke="#fff" stroke-width="1.2" fill="none"/></svg>
<svg class="abs" style="left:1289px;top:12px" width="16" height="16" viewBox="0 0 16 16"><circle cx="8" cy="8" r="8" fill="#f4dc3a"/><path d="M1 11C3 15.5 8 16.5 12 14.5C8.5 15 4 14 1 11ZM11 .7C13.5 1.6 15.6 4 15.8 7C15 4.5 13.4 2.3 11 .7Z" fill="#3c9a2a"/><path d="M8 4V12M4 8H12" stroke="#3c9a2a" stroke-width="2.4"/></svg>
<svg class="abs" style="left:1312px;top:13px" width="18" height="15" viewBox="0 0 18 15"><g stroke="#fff" stroke-width="1.1" fill="none"><path d="M5 1.5H16.5V10.5H5M9 10.5V13.5M5.5 13.5H13.5"/><rect x="1.5" y="1.5" width="3.5" height="3.5"/><path d="M3.2 5V13.5H6"/></g></svg>

<svg class="abs" style="left:63px;top:7.5px" width="24" height="24" viewBox="0 0 24 24"><defs>
<linearGradient id="ffa" x1=".85" y1=".1" x2=".2" y2=".95"><stop offset="0" stop-color="#fff36b"/><stop offset=".3" stop-color="#ffbd2f"/><stop offset=".6" stop-color="#ff5a36"/><stop offset="1" stop-color="#e9189a"/></linearGradient>
<radialGradient id="ffb" cx=".6" cy=".3" r=".8"><stop offset="0" stop-color="#a85bff"/><stop offset="1" stop-color="#4a3bc9"/></radialGradient>
<linearGradient id="ffc" x1="0" y1="0" x2="1" y2="1"><stop offset="0" stop-color="#ffb12f"/><stop offset="1" stop-color="#ff7a2a"/></linearGradient></defs>
<path d="M14.600 .700C15.600 3 19.600 4.200 21.600 8.200C23.800 12.800 22.600 18.500 18.300 21.600C13.800 24.800 7.300 24 3.600 19.800C.400 16 .200 10.800 2.600 7C2.700 5.700 3.200 4.500 3.900 3.800C4.100 4.800 4.600 5.600 5.300 6.100C5.700 5.300 6.400 4.500 7.300 4C7.200 5 7.500 5.800 8 6.500C9.500 5.500 11 5.600 12 6.200C11.600 4 12.800 1.800 14.600 .700Z" fill="url(#ffa)"/>
<circle cx="11.900" cy="13" r="4.900" fill="url(#ffb)"/>
<path d="M3.400 9.200C5.500 8.600 7.600 8.800 9 9.600C10.300 8.600 12.500 8.500 14 9.300C12.600 9.400 11.500 10 11 11C9.800 10.800 8.800 11.300 8.200 12.100C7.300 10.800 5.500 9.800 3.400 9.200Z" fill="url(#ffc)"/>
</svg>
<svg class="abs" style="left:112.5px;top:8px" width="26" height="25" viewBox="0 0 26 25"><circle cx="11.500" cy="11.800" r="11.200" fill="#7d05d9"/>
<path d="M3.200 9.300C5 7.200 8.800 7.100 11.500 9.100C14.200 7.100 18 7.200 19.800 9.300C20.400 13.200 18.800 16.300 16.300 16.300C14.100 16.300 13.200 14.300 11.500 14.300C9.800 14.300 8.900 16.300 6.700 16.300C4.200 16.300 2.600 13.200 3.200 9.300Z" fill="#fff"/>
<ellipse cx="7.600" cy="11.700" rx="2.300" ry="1.600" fill="#7d05d9"/><ellipse cx="15.400" cy="11.700" rx="2.300" ry="1.600" fill="#7d05d9"/>
<g transform="translate(12.100,12.800) scale(.5)"><path d="M14.600 .700C15.600 3 19.600 4.200 21.600 8.200C23.800 12.800 22.600 18.500 18.300 21.600C13.800 24.800 7.300 24 3.600 19.800C.400 16 .200 10.800 2.600 7C2.700 5.700 3.200 4.500 3.900 3.800C4.100 4.800 4.600 5.600 5.300 6.100C5.700 5.300 6.400 4.500 7.300 4C7.200 5 7.500 5.800 8 6.500C9.500 5.500 11 5.600 12 6.200C11.600 4 12.800 1.800 14.600 .700Z" fill="url(#ffa)"/><circle cx="11.900" cy="13" r="4.900" fill="url(#ffb)"/><path d="M3.400 9.200C5.500 8.600 7.600 8.800 9 9.600C10.300 8.600 12.500 8.500 14 9.300C12.600 9.400 11.500 10 11 11C9.800 10.800 8.800 11.300 8.200 12.100C7.300 10.800 5.500 9.800 3.400 9.200Z" fill="url(#ffc)"/></g>
</svg>

<span class="t" style="left:1388.50px;top:4.84px;font-size:12px;color:#fff;transform:scaleX(0.8558);transform-origin:0 0;">10:56</span>
<span class="t" style="left:1376.20px;top:22.84px;font-size:12px;color:#fff;transform:scaleX(0.8841);transform-origin:0 0;">13.03.2026</span>
<span class="t" style="left:1340.00px;top:14.34px;font-size:12px;color:#fff;letter-spacing:-0.510px;">РУС</span>
</div>
</body></html>
